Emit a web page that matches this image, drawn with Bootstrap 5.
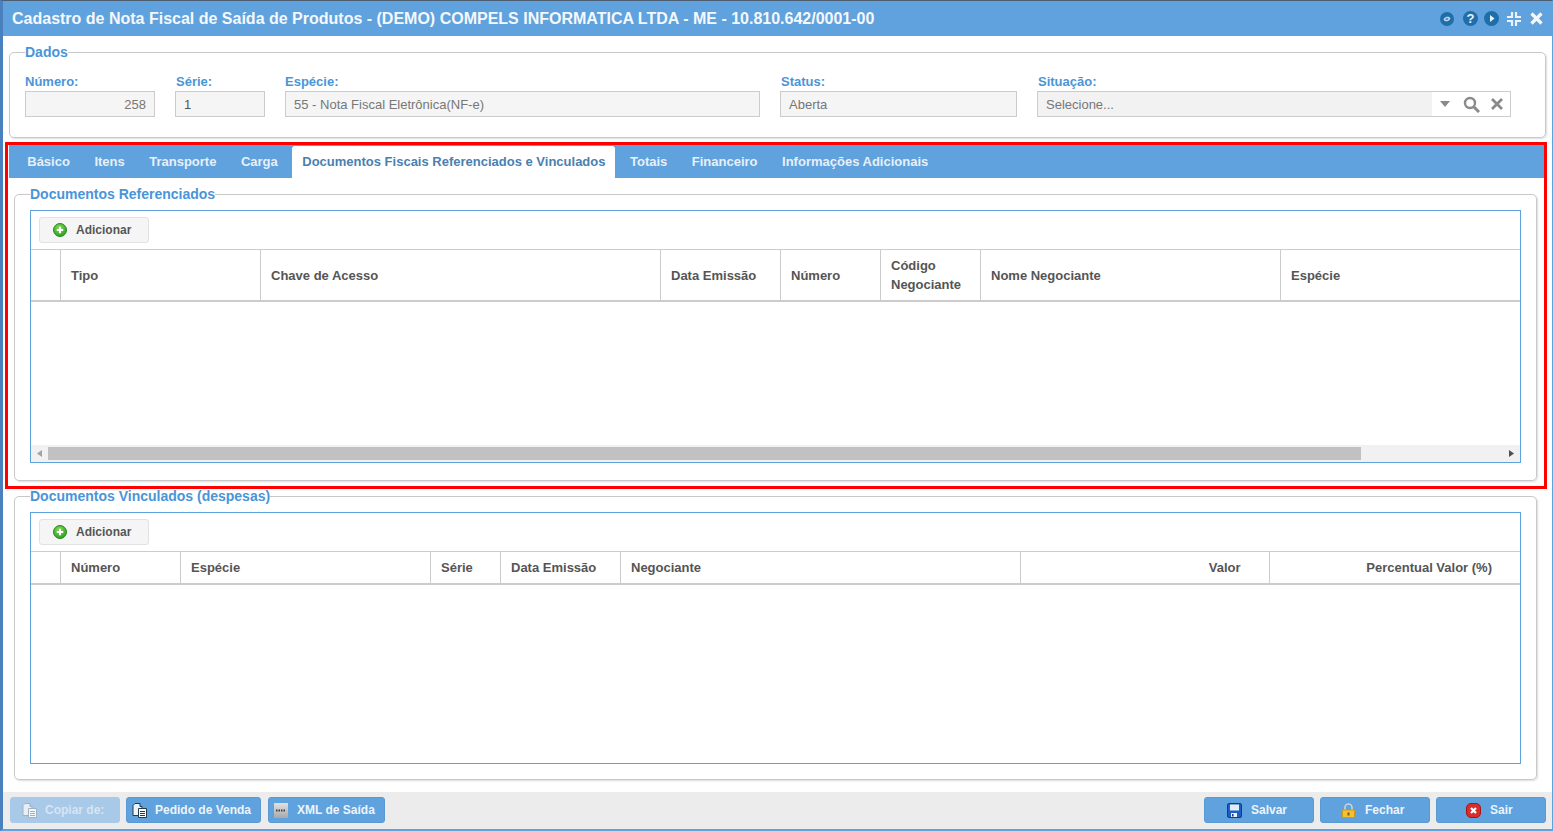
<!DOCTYPE html>
<html lang="pt-BR">
<head>
<meta charset="utf-8">
<title>Cadastro de Nota Fiscal de Saída</title>
<link href="https://cdn.jsdelivr.net/npm/bootstrap@5.3.0/dist/css/bootstrap.min.css" rel="stylesheet">
<style>
html,body{height:100%;overflow:hidden}
body{font-family:"Liberation Sans",Arial,sans-serif;font-size:13px;color:#555;background:#fff}
.win{height:831px;width:1553px;border-left:3px solid #4a80bd;border-top:1px solid #4d5d70;border-right:1px solid #5fa2dd;display:flex;flex-direction:column;border-bottom:2px solid #5fa2dd}
.win-title{height:35px;flex:none;background:#5fa2dd;color:#f4f8fc;font-size:16px;font-weight:700;padding:0 9px;display:flex;align-items:center;justify-content:space-between}
.win-tools{display:flex;align-items:center}
.tg9{margin-left:9px}.tg6{margin-left:6px}.tg7{margin-left:7px}.tg8{margin-left:8px}
.win-body{flex:1;min-height:0;padding:0 5px 0 2px;display:flex;flex-direction:column}
.fset{border:1px solid #c8c8c8;border-radius:5px;box-shadow:1px 1px 2px #ddd;margin:0;padding:0;min-width:0}
.fset>legend{float:none;width:auto;margin:0;padding:0;font-size:14px;line-height:16px;font-weight:700;color:#4a95d8}
.dados{margin:8px 1px 0 4px;height:94px;padding:0 15px}
.frow{display:flex;margin-top:13px}
.fld{display:flex;flex-direction:column}
.fld label{font-size:13px;line-height:17px;font-weight:700;color:#4a95d8;margin-bottom:1px;padding-left:1px}
.fw1 label,.fw3 label{padding-left:0}
.fw1{width:150px}.fw2{width:110px}.fw3{width:495px}.fw4{width:257px}
.inp{height:26px;border:1px solid #ccc;background:#f5f5f5;font-size:13px;color:#777;padding:1px 8px 0;display:flex;align-items:center}
.iw1{width:130px}.iw2{width:90px;color:#555}.iw3{width:475px}.iw4{width:237px}.iw5{width:474px}
.red{border:3px solid #f00;margin:4px 0 0 0;height:347px;flex:none;display:flex;flex-direction:column;padding-left:1px}
.tabsbar{background:#5fa2dd;height:33px;display:flex;align-items:flex-end;padding-left:6px;flex:none}
.tabx{padding:0 12.25px;height:33px;line-height:33px;font-weight:700;font-size:13px;color:#e6f0f9;white-space:nowrap}
.tabx.on{background:#fff;color:#4a7fb0;border-radius:3px 3px 0 0;height:32px;line-height:31px;padding:0 10px 0 10.25px;margin:0 2.25px 0 2px}
.docs{margin:8px 7px 0 5px;padding:0 15px;height:295px}
.docs2{margin:-1px 10px 0 9px;padding:0 15px;height:292px;flex:none}
.grid-box{border:1px solid #5fa2dd;display:flex;flex-direction:column;margin-top:8px}
.grid-tools{height:38px;padding:6px 8px;flex:none;display:flex;align-items:flex-start}
.addb{height:26px;width:110px;background:#f5f5f5;border:1px solid #e2e2e2;border-radius:3px;display:flex;align-items:center;padding-left:13px;gap:9px;font-size:12px;font-weight:700;color:#555}
table.gtab{table-layout:fixed;border-collapse:collapse;width:100%;margin:0}
table.gtab th{border-top:1px solid #ccc;border-bottom:2px solid #ccc;border-left:1px solid #ccc;padding:0 10px 0 10.5px;font-size:13px;font-weight:700;color:#555;line-height:19px;vertical-align:middle}
table.gtab th:first-child{border-left:0}
.rh1{height:51px}.rh2{height:32px}
.rh1 .one{padding-top:2px}
.c29{width:29px}.c70{width:70px}.c100{width:100px}.c120{width:120px}.c200{width:200px}.c249{width:249px}.c250{width:250px}.c300{width:300px}.c400{width:400px}
table.gtab th.ta-end{text-align:right;padding-right:28px}
.gb1{height:253px}
.gb2{height:252px}
.gbody{flex:1}
.hscroll{height:17px;background:#f1f1f1;display:flex;align-items:center;flex:none;padding:1px 0}
.hscroll .arw{width:17px;height:15px;display:flex;align-items:center;justify-content:center}
.thumb{height:13px;background:#c1c1c1;width:1313px;flex:none}
.foot{flex:none;margin:auto -5px 0 -2px;height:37px;background:#ececec;display:flex;align-items:flex-start;justify-content:space-between;padding:5px 6px 0 7px}
.fbtn{height:26px;background:#5fa2dd;border:1px solid #5a9ad4;border-radius:3px;color:#edf4fb;font-size:12px;font-weight:700;display:inline-flex;align-items:center;gap:8px;white-space:nowrap}
.fbtn.dim{background:#a9c9e8;border-color:#a9c9e8;color:#d5e5f4}
.b1{width:110px;padding-left:11px}.b2{width:135px;padding-left:5px}.b3{width:117px;padding-left:5px;margin-left:1px;gap:9px}
.b4{width:110px;padding-left:22px;gap:9px}.b5{width:110px;padding-left:21px;gap:10px}.b6{width:110px;padding-left:29px;gap:9px}
.fgroup{display:flex;gap:6px}
.sel-a{width:394px;background:#f2f2f2;height:24px;display:flex;align-items:center;padding:1px 0 0 8px;color:#777;flex:none}
.sel{padding:0;background:#fff}
.sg8{margin-left:8px}.sg13{margin-left:13px}.sg11{margin-left:11px}
</style>
</head>
<body>
<svg width="0" height="0" class="position-absolute"><defs>
<radialGradient id="gg" cx=".45" cy=".35" r=".7"><stop offset="0" stop-color="#8fdc5a"/><stop offset="1" stop-color="#1f9a22"/></radialGradient>
<linearGradient id="xg" x1="0" y1="0" x2="0" y2="1"><stop offset="0" stop-color="#e2e2e2"/><stop offset="1" stop-color="#a8a8a8"/></linearGradient>
<symbol id="addic" viewBox="0 0 14 14"><circle cx="7" cy="7" r="6.5" fill="url(#gg)" stroke="#2a8a1c"/><path d="M7 3.800v6.400M3.800 7h6.400" stroke="#fff" stroke-width="2"/></symbol>
</defs></svg>
<div class="win">
  <div class="win-title">
    <span>Cadastro de Nota Fiscal de Saída de Produtos - (DEMO) COMPELS INFORMATICA LTDA - ME - 10.810.642/0001-00</span>
    <span class="win-tools">
      <svg width="14" height="14" viewBox="0 0 14 14"><circle cx="7" cy="7" r="7" fill="#1f6eaa"/><ellipse cx="7" cy="7" rx="3" ry="1.800" fill="#cfe3f3" stroke="#cfe3f3" stroke-width=".6" transform="rotate(-15 7 7)"/><ellipse cx="7" cy="7" rx="1.800" ry=".7" fill="#1f6eaa" transform="rotate(-15 7 7)"/></svg>
      <svg class="tg9" width="15" height="15" viewBox="0 0 15 15"><circle cx="7.500" cy="7.500" r="7.500" fill="#1f6eaa"/><text x="7.500" y="12" text-anchor="middle" font-size="13" font-weight="700" fill="#e8f2fa" font-family="Liberation Sans">?</text></svg>
      <svg class="tg6" width="15" height="15" viewBox="0 0 15 15"><circle cx="7.500" cy="7.500" r="7.500" fill="#1f6eaa"/><path d="M6 4 10.500 7.500 6 11Z" fill="#e8f2fa"/></svg>
      <svg class="tg7" width="16" height="16" viewBox="0 0 16 16" fill="none" stroke="#eaf3fa" stroke-width="2.200"><path d="M6 1v5H1M10 1v5h5M6 15v-5H1M10 15v-5h5"/></svg>
      <svg class="tg8" width="13" height="13" viewBox="0 0 13 13" fill="none" stroke="#f4f8fc" stroke-width="3.200"><path d="M1.500 1.500l10 10M11.500 1.500l-10 10"/></svg>
    </span>
  </div>
  <div class="win-body">
    <fieldset class="fset dados">
      <legend>Dados</legend>
      <div class="frow">
        <div class="fld fw1"><label>Número:</label><div class="inp iw1 justify-content-end">258</div></div>
        <div class="fld fw2"><label>Série:</label><div class="inp iw2">1</div></div>
        <div class="fld fw3"><label>Espécie:</label><div class="inp iw3">55 - Nota Fiscal Eletrônica(NF-e)</div></div>
        <div class="fld fw4"><label>Status:</label><div class="inp iw4">Aberta</div></div>
        <div class="fld"><label>Situação:</label>
          <div class="inp sel iw5">
            <div class="sel-a">Selecione...</div>
            <svg class="sg8" width="10" height="6" viewBox="0 0 10 6"><path d="M0 0h10L5 6Z" fill="#8a8a8a"/></svg>
            <svg class="sg13" width="17" height="17" viewBox="0 0 17 17" fill="none" stroke="#8a8a8a"><circle cx="7" cy="7" r="5" stroke-width="2.400"/><path d="M11 11l5 5" stroke-width="3"/></svg>
            <svg class="sg11" width="12" height="12" viewBox="0 0 12 12" fill="none" stroke="#8a8a8a" stroke-width="2.800"><path d="M1 1l10 10M11 1 1 11"/></svg>
          </div>
        </div>
      </div>
    </fieldset>

    <div class="red">
      <div class="tabsbar">
        <div class="tabx">Básico</div><div class="tabx">Itens</div><div class="tabx">Transporte</div><div class="tabx">Carga</div>
        <div class="tabx on">Documentos Fiscais Referenciados e Vinculados</div>
        <div class="tabx">Totais</div><div class="tabx">Financeiro</div><div class="tabx">Informações Adicionais</div>
      </div>
      <fieldset class="fset docs">
        <legend>Documentos Referenciados</legend>
        <div class="grid-box gb1">
          <div class="grid-tools"><div class="addb"><svg width="14" height="14"><use href="#addic"/></svg>Adicionar</div></div>
          <table class="gtab">
            <colgroup><col class="c29"><col class="c200"><col class="c400"><col class="c120"><col class="c100"><col class="c100"><col class="c300"><col></colgroup>
            <thead><tr class="rh1"><th></th><th class="one">Tipo</th><th class="one">Chave de Acesso</th><th class="one">Data Emissão</th><th class="one">Número</th><th>Código Negociante</th><th class="one">Nome Negociante</th><th class="one">Espécie</th></tr></thead>
          </table>
          <div class="gbody"></div>
          <div class="hscroll">
            <div class="arw"><svg width="5" height="7" viewBox="0 0 5 7"><path d="M5 0v7L0 3.500Z" fill="#a3a3a3"/></svg></div>
            <div class="thumb"></div>
            <div class="arw ms-auto"><svg width="5" height="7" viewBox="0 0 5 7"><path d="M0 0v7l5-3.500Z" fill="#505050"/></svg></div>
          </div>
        </div>
      </fieldset>
    </div>

    <fieldset class="fset docs2">
      <legend>Documentos Vinculados (despesas)</legend>
      <div class="grid-box gb2">
        <div class="grid-tools"><div class="addb"><svg width="14" height="14"><use href="#addic"/></svg>Adicionar</div></div>
        <table class="gtab">
          <colgroup><col class="c29"><col class="c120"><col class="c250"><col class="c70"><col class="c120"><col class="c400"><col class="c249"><col></colgroup>
          <thead><tr class="rh2"><th></th><th>Número</th><th>Espécie</th><th>Série</th><th>Data Emissão</th><th>Negociante</th><th class="ta-end">Valor</th><th class="ta-end">Percentual Valor (%)</th></tr></thead>
        </table>
        <div class="gbody"></div>
      </div>
    </fieldset>

    <div class="foot">
      <div class="fgroup">
        <div class="fbtn dim b1"><svg width="15" height="15" viewBox="0 0 15 15"><path d="M3 .5h5v3h2v9H1v-10Z" fill="#e8eef4" stroke="#9fb2c4"/><path d="M6.500 5.500h8v9h-8Z" fill="#f5f8fb" stroke="#9fb2c4"/><path d="M8 8.500h5M8 10.500h5M8 12.500h5" stroke="#9fb2c4"/></svg>Copiar de:</div>
        <div class="fbtn b2"><svg width="15" height="15" viewBox="0 0 15 15"><path d="M3 .5h5v3h2v9H1v-10Z" fill="#eef3f8" stroke="#223a52"/><path d="M6.500 5.500h8v9h-8Z" fill="#fff" stroke="#223a52"/><path d="M8 8.500h5M8 10.500h5M8 12.500h5" stroke="#223a52"/></svg>Pedido de Venda</div>
        <div class="fbtn b3"><svg width="14" height="15" viewBox="0 0 14 15"><rect width="14" height="15" fill="url(#xg)"/><path d="M2 7.500h10" stroke="#3a3f45" stroke-width="2" stroke-dasharray="1.500 1"/></svg>XML de Saída</div>
      </div>
      <div class="fgroup">
        <div class="fbtn b4"><svg width="15" height="15" viewBox="0 0 15 15"><rect x=".5" y=".5" width="14" height="14" rx="1.500" fill="#1e5fc4" stroke="#123a8e"/><rect x="3" y="1.500" width="9" height="6" fill="#e3edf8"/><rect x="4" y="10" width="6" height="4" fill="#eee"/><rect x="5" y="11" width="1.500" height="2.500" fill="#123a8e"/></svg>Salvar</div>
        <div class="fbtn b5"><svg width="13" height="15" viewBox="0 0 13 15"><path d="M3 7V4.500a3.500 3.500 0 0 1 7 0V7" fill="none" stroke="#d2d2d2" stroke-width="1.600"/><rect x="0.500" y="7" width="12" height="7.500" fill="#f3c232" stroke="#c99a1c"/><rect x="5.500" y="9.500" width="2" height="3" fill="#7a5a10"/></svg>Fechar</div>
        <div class="fbtn b6"><svg width="15" height="15" viewBox="0 0 15 15"><rect x=".5" y=".5" width="14" height="14" rx="4.500" fill="#d92c2c" stroke="#a31616"/><path d="M5 5l5 5M10 5l-5 5" stroke="#fff" stroke-width="2.200"/></svg>Sair</div>
      </div>
    </div>
  </div>
</div>
</body>
</html>
